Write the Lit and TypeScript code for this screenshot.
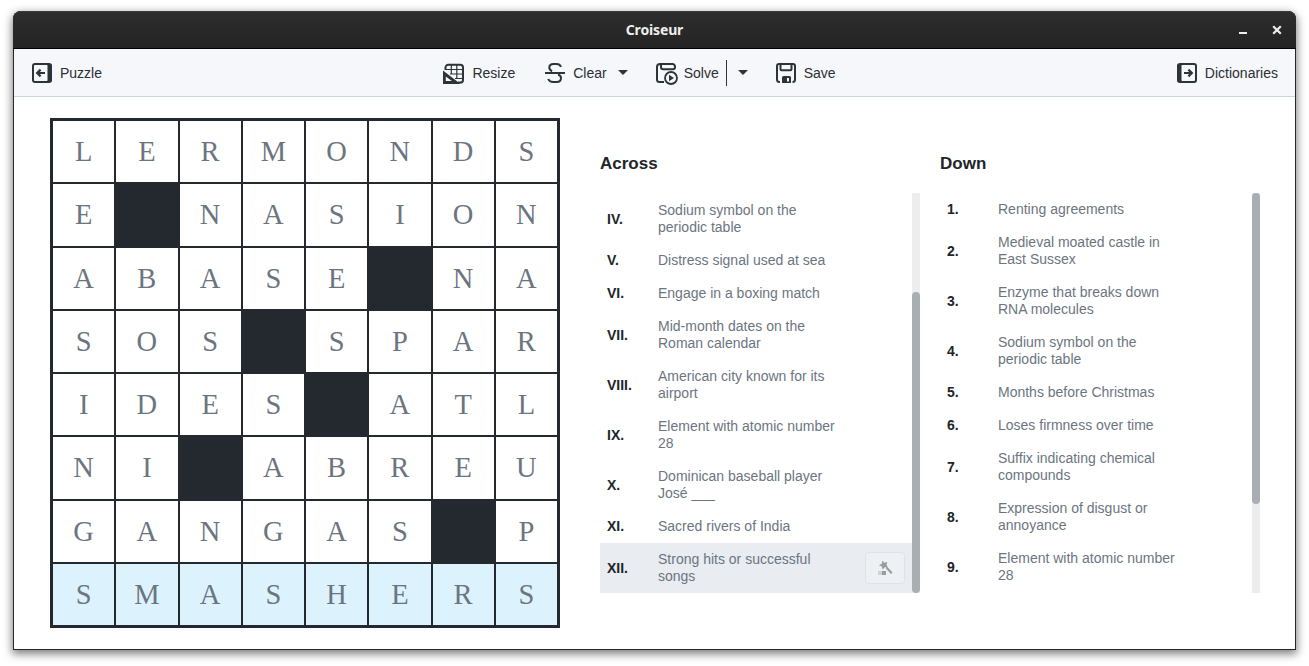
import { LitElement, html, css, svg } from "lit";
import { customElement, property } from "lit/decorators.js";

interface Clue {
  label: string;
  text: string;
}

const ROWS = ["LERMONDS", "E#NASION", "ABASE#NA", "SOS#SPAR", "IDES#ATL", "NI#ABREU", "GANGAS#P", "SMASHERS"];

const ACROSS: Clue[] = [
  { label: "IV.", text: "Sodium symbol on the periodic table" },
  { label: "V.", text: "Distress signal used at sea" },
  { label: "VI.", text: "Engage in a boxing match" },
  { label: "VII.", text: "Mid-month dates on the Roman calendar" },
  { label: "VIII.", text: "American city known for its airport" },
  { label: "IX.", text: "Element with atomic number 28" },
  { label: "X.", text: "Dominican baseball player José ___" },
  { label: "XI.", text: "Sacred rivers of India" },
  { label: "XII.", text: "Strong hits or successful songs" },
];

const DOWN: Clue[] = [
  { label: "1.", text: "Renting agreements" },
  { label: "2.", text: "Medieval moated castle in East Sussex" },
  { label: "3.", text: "Enzyme that breaks down RNA molecules" },
  { label: "4.", text: "Sodium symbol on the periodic table" },
  { label: "5.", text: "Months before Christmas" },
  { label: "6.", text: "Loses firmness over time" },
  { label: "7.", text: "Suffix indicating chemical compounds" },
  { label: "8.", text: "Expression of disgust or annoyance" },
  { label: "9.", text: "Element with atomic number 28" },
];

const ICONS = {
  puzzle: svg`<rect x="1" y="1" width="18" height="18" rx="2" fill="none" stroke="currentColor" stroke-width="2"/>
    <path d="M14.500 1H18a2 2 0 0 1 2 2v14a2 2 0 0 1-2 2h-3.500q1-1 1-2V3q0-1-1-2z" fill="currentColor"/>
    <path d="M13 10H5.400M8.600 6.600L5.200 10l3.400 3.400" fill="none" stroke="currentColor" stroke-width="2.200"/>`,
  dictionaries: svg`<rect x="1" y="1" width="18" height="18" rx="2" fill="none" stroke="currentColor" stroke-width="2"/>
    <path d="M5.500 1H2a2 2 0 0 0-2 2v14a2 2 0 0 0 2 2h3.500q-1-1-1-2V3q0-1 1-2z" fill="currentColor"/>
    <path d="M7 10h7.600M11.400 6.600l3.400 3.400-3.400 3.400" fill="none" stroke="currentColor" stroke-width="2.200"/>`,
  resize: svg`<path d="M2.500 7V4.500a2.700 2.700 0 0 1 2.700-2.700h12.100A2.700 2.700 0 0 1 20 4.500v12.400a2.700 2.700 0 0 1-2.700 2.700H15" fill="none" stroke="currentColor" stroke-width="2"/>
    <path d="M8.300 2v8.500M13.800 2v13.500M3 6.500h17M7 11h13M12 15.500h8" fill="none" stroke="currentColor" stroke-width="1.200"/>
    <path d="M0 7.500L17.500 21H0zM2.800 13.500v4.500h6z" fill="currentColor" fill-rule="evenodd"/>`,
  clear: svg`<path d="M0 10h20" stroke="currentColor" stroke-width="2"/>
    <path d="M16 3.800C15.200 1.900 13.800 1 11.500 1H8.500C5.800 1 4.300 2.600 4.300 4.600c0 1.700 1 2.900 2.800 3.600M13 11.500c2 .600 3 1.800 3 3.500 0 2.400-1.700 4-4.300 4H8.200c-2.600 0-4.200-1-5-3" fill="none" stroke="currentColor" stroke-width="2"/>`,
  solve: svg`<path d="M8 19H3.500A2.500 2.500 0 0 1 1 16.500V4a3 3 0 0 1 3-3h12.500A2.500 2.500 0 0 1 19 3.500V4a2.200 2.200 0 0 1-2.200 2.200H7.200A2.200 2.200 0 0 1 5 4V1" fill="none" stroke="currentColor" stroke-width="2"/>
    <circle cx="15" cy="15" r="6" fill="none" stroke="currentColor" stroke-width="1.800"/>
    <path d="M13 11.800l5 3.200-5 3.200z" fill="currentColor"/>`,
  save: svg`<path d="M4 19H3.500A2.500 2.500 0 0 1 1 16.500V3a2 2 0 0 1 2-2h14a2 2 0 0 1 2 2v13.500A2.500 2.500 0 0 1 16.500 19M4.500 1v5.200A1 1 0 0 0 5.500 7.200h9a1 1 0 0 0 1-1V1" fill="none" stroke="currentColor" stroke-width="2"/>
    <path d="M6 20v-5.500A1.500 1.500 0 0 1 7.500 13h6A1.500 1.500 0 0 1 15 14.500V20zM11 15v3.500h2V15z" fill="currentColor" fill-rule="evenodd"/>`,
  wand: svg`<path d="M4.500-.500l1.700 2.200L9.300 1 8.500 3.900l1.500 2.600-3.200-.200-2.300 2.200-.700-3L.900 4.200l2.900-1.400z" fill="#9a9d9e"/>
    <path d="M8.500 6.500l5.200 5.700" stroke="#9a9d9e" stroke-width="2.200"/>
    <rect x="0" y="10" width="4" height="4" fill="#d0d2d3"/><rect x="4" y="10" width="4" height="4" fill="#9a9d9e"/>`,
};

@customElement("clue-list")
export class ClueList extends LitElement {
  @property() heading = "";
  @property({ attribute: false }) clues: Clue[] = [];
  @property() current = "";
  @property({ type: Number }) offset = 0;
  @property({ type: Number }) thumbTop = 0;
  @property({ type: Number }) thumbSize = 0;

  static styles = css`
    :host { display: block; width: 320px; }
    h2 { margin: 0; font-size: 17px; line-height: 20px; color: #212529; }
    .view { display: flex; height: 400px; margin-top: 19px; overflow: hidden; }
    .rows { flex: 1; min-width: 0; }
    .row { display: flex; align-items: center; padding: 8px 7px; line-height: 17px; }
    .current { background: #e9ecf1; }
    .label { width: 51px; flex: none; font-weight: bold; color: #212529; }
    .text { width: 187px; flex: none; color: #6c757f; }
    .magic { display: flex; align-items: center; justify-content: center; box-sizing: border-box;
      width: 40px; height: 32px; margin: 0 0 0 auto; padding: 0; border: 1px solid #dfe3e8; border-radius: 4px; background: #eef1f4; }
    .magic svg { overflow: visible; }
    .track { width: 8px; background: #ededed; }
    .thumb { width: 8px; border-radius: 4px; background: #a9aeb2; }
  `;

  render() {
    return html`
      <h2>${this.heading}</h2>
      <div class="view">
        <div class="rows" style="padding-top:${this.offset}px">
          ${this.clues.map((c) => {
            const active = c.label === this.current;
            return html`<div class="row ${active ? "current" : ""}">
              <span class="label">${c.label}</span><span class="text">${c.text}</span>
              ${active
                ? html`<button class="magic" aria-label="Suggest clue"><svg width="15" height="15" viewBox="0 0 15 15">${ICONS.wand}</svg></button>`
                : ""}
            </div>`;
          })}
        </div>
        <div class="track" style="padding-top:${this.thumbTop}px">
          <div class="thumb" style="height:${this.thumbSize}px"></div>
        </div>
      </div>
    `;
  }
}

@customElement("app-root")
export class AppRoot extends LitElement {
  static styles = css`
    :host { display: block; box-sizing: border-box; height: 666px; padding: 11px 13px 16px; overflow: hidden;
      background: #fff; font: 14px "Liberation Sans", Arial, sans-serif; color: #2a2f33; }
    .window { display: flex; flex-direction: column; box-sizing: border-box; height: 639px; border-radius: 8px 8px 0 0;
      background: #232729; padding: 0 1px 1px; box-shadow: 0 3px 9px 1px rgba(0, 0, 0, 0.5); }
    .titlebar { display: grid; grid-template-columns: 1fr auto 1fr; align-items: center; box-sizing: border-box; height: 38px;
      margin: 0 -1px; border-bottom: 1px solid #000; border-radius: 8px 8px 0 0;
      background: linear-gradient(#2d2d2d, #242424); box-shadow: inset 0 1px #3a3b3b; }
    .title { grid-column: 2; font: bold 14px/37px "Noto Sans", sans-serif; letter-spacing: -0.15px; color: #eeeeec; }
    .controls { display: flex; justify-content: flex-end; gap: 24px; padding-right: 14px; color: #eeeeec; }
    .toolbar { display: grid; grid-template-columns: 1fr auto 1fr; align-items: center; box-sizing: border-box;
      height: 48px; padding: 0 17px 0 18px; background: #f6f7fa; border-bottom: 1px solid #cbd3dd; }
    .tool { display: flex; align-items: center; gap: 8px; }
    .tool svg { display: block; color: #2d3436; overflow: visible; }
    .right { justify-content: flex-end; }
    .actions { display: flex; align-items: center; padding-right: 31px; }
    .gap-clear { margin-left: 30px; }
    .gap-solve { margin-left: 28px; }
    .gap-save { margin-left: 28px; }
    .caret { width: 0; height: 0; border: 5px solid transparent; border-top-color: #2d3436; border-bottom: 0; margin-left: 11px; }
    .divider { width: 1px; height: 26px; margin-left: 7px; background: #2d3436; }
    .content { display: flex; flex: 1; padding: 21px 36px 0; background: #fff; }
    .grid { display: grid; box-sizing: border-box; flex: none; width: 510px; height: 510px; grid-template: repeat(8, 1fr) / repeat(8, 1fr);
      gap: 2px; padding: 3px; background: #242930; }
    .cell { display: flex; align-items: center; justify-content: center; box-sizing: border-box; padding-top: 1px; background: #fff; color: #6c757f;
      font: 28.500px/32px "Liberation Serif", "Times New Roman", serif; }
    .block { background: #242930; }
    .lit { background: #dcf3fe; }
    .clues { display: flex; gap: 20px; padding: 36px 0 0 40px; }
  `;

  private icon(name: keyof typeof ICONS, width = 20) {
    return html`<svg width=${width} height="20" viewBox="0 0 ${width} 20" aria-hidden="true">${ICONS[name]}</svg>`;
  }

  render() {
    return html`
      <div class="window">
        <header class="titlebar">
          <span class="title">Croiseur</span>
          <div class="controls">
            <svg width="10" height="10"><path d="M1 8h8" stroke="currentColor" stroke-width="2" /></svg>
            <svg width="10" height="10"><path d="M1.200 1.200l7.600 7.600M8.800 1.200L1.200 8.800" stroke="currentColor" stroke-width="2.200" /></svg>
          </div>
        </header>
        <nav class="toolbar">
          <div class="tool">${this.icon("puzzle")}<span>Puzzle</span></div>
          <div class="actions">
            <div class="tool">${this.icon("resize", 21)}<span>Resize</span></div>
            <div class="tool gap-clear">${this.icon("clear")}<span>Clear</span></div>
            <i class="caret"></i>
            <div class="tool gap-solve">${this.icon("solve")}<span>Solve</span></div>
            <i class="divider"></i>
            <i class="caret"></i>
            <div class="tool gap-save">${this.icon("save")}<span>Save</span></div>
          </div>
          <div class="tool right">${this.icon("dictionaries")}<span>Dictionaries</span></div>
        </nav>
        <main class="content">
          <div class="grid">
            ${ROWS.map((row, y) =>
              [...row].map((ch) =>
                ch === "#"
                  ? html`<div class="cell block"></div>`
                  : html`<div class="cell ${y === 7 ? "lit" : ""}">${ch}</div>`
              )
            )}
          </div>
          <div class="clues">
            <clue-list .heading=${"Across"} .clues=${ACROSS} .current=${"XII."} .offset=${1} .thumbTop=${99} .thumbSize=${301}></clue-list>
            <clue-list .heading=${"Down"} .clues=${DOWN} .thumbSize=${311}></clue-list>
          </div>
        </main>
      </div>
    `;
  }
}
